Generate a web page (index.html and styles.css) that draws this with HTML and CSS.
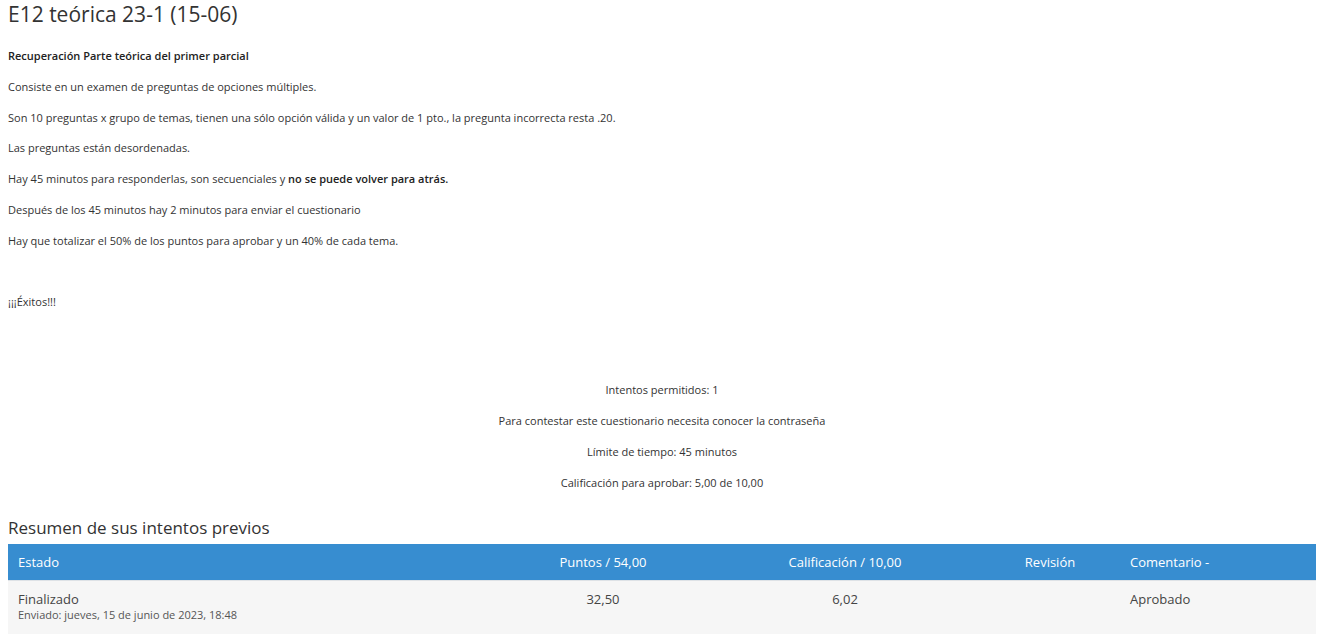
FILE: index.html
```html
<!DOCTYPE html>
<html lang="es">
<head>
<meta charset="utf-8">
<title>E12 teórica 23-1 (15-06)</title>
<link rel="stylesheet" href="styles.css">
</head>
<body>
<div class="page">
  <h2 class="title">E12 teórica 23-1 (15-06)</h2>
  <div class="intro">
    <p><strong>Recuperación Parte teórica del primer parcial</strong></p>
    <p>Consiste en un examen de preguntas de opciones múltiples.</p>
    <p>Son 10 preguntas x grupo de temas, tienen una sólo opción válida y un valor de 1 pto., la pregunta incorrecta resta .20.</p>
    <p>Las preguntas están desordenadas.</p>
    <p>Hay 45 minutos para responderlas, son secuenciales y <strong>no se puede volver para atrás.</strong></p>
    <p>Después de los 45 minutos hay 2 minutos para enviar el cuestionario</p>
    <p>Hay que totalizar el 50% de los puntos para aprobar y un 40% de cada tema.</p>
    <p>&nbsp;</p>
    <p>¡¡¡Éxitos!!!</p>
  </div>
  <div class="info">
    <p>Intentos permitidos: 1</p>
    <p>Para contestar este cuestionario necesita conocer la contraseña</p>
    <p>Límite de tiempo: 45 minutos</p>
    <p>Calificación para aprobar: 5,00 de 10,00</p>
  </div>
  <h3 class="summary-title">Resumen de sus intentos previos</h3>
  <table class="attempts">
    <colgroup>
      <col class="c1"><col class="c2"><col class="c3"><col class="c4"><col class="c5">
    </colgroup>
    <thead>
      <tr>
        <th class="left">Estado</th>
        <th>Puntos / 54,00</th>
        <th>Calificación / 10,00</th>
        <th>Revisión</th>
        <th class="left">Comentario -</th>
      </tr>
    </thead>
    <tbody>
      <tr>
        <td class="left">Finalizado<span class="sub">Enviado: jueves, 15 de junio de 2023, 18:48</span></td>
        <td>32,50</td>
        <td>6,02</td>
        <td></td>
        <td class="left">Aprobado</td>
      </tr>
    </tbody>
  </table>
</div>
</body>
</html>
```
FILE: styles.css
```css
html, body {
  margin: 0;
  padding: 0;
  background: #fff;
}
body {
  font-family: "Open Sans", "Noto Sans", sans-serif;
  color: #333;
  font-size: 11px;
}
.page {
  padding: 0 16px 0 8px;
}
.title {
  margin: 0;
  padding-top: 0;
  font-weight: 400;
  font-size: 21px;
  line-height: 28px;
  color: #333;
}
.intro {
  margin-top: 20px;
}
.intro p {
  margin: 0 0 14.75px;
  line-height: 16px;
}
.info p {
  margin: 0 0 15px;
  line-height: 16px;
}
.intro strong, .info strong {
  font-weight: 600;
  color: #222;
}
.info {
  margin-top: 72px;
  text-align: center;
}
.summary-title {
  margin: 26px 0 5px;
  font-weight: 400;
  font-size: 17px;
  line-height: 22px;
  color: #333;
}
.attempts {
  width: 100%;
  border-collapse: collapse;
  table-layout: fixed;
}
.c1 { width: 488px; }
.c2 { width: 214px; }
.c3 { width: 270px; }
.c4 { width: 140px; }
.c5 { width: auto; }
.attempts th {
  background: #378dd0;
  color: #fff;
  font-weight: 400;
  font-size: 13px;
  height: 36px;
  padding: 0 10px;
  text-align: center;
  border-bottom: 1px solid #dee2e6;
}
.attempts td {
  background: #f6f6f6;
  font-size: 13px;
  padding: 9px 10px 14px;
  text-align: center;
  vertical-align: top;
  line-height: 18px;
  color: #444;
}
.attempts .left {
  text-align: left;
}
.sub {
  display: block;
  font-size: 11px;
  line-height: 14px;
  color: #555;
}
```
